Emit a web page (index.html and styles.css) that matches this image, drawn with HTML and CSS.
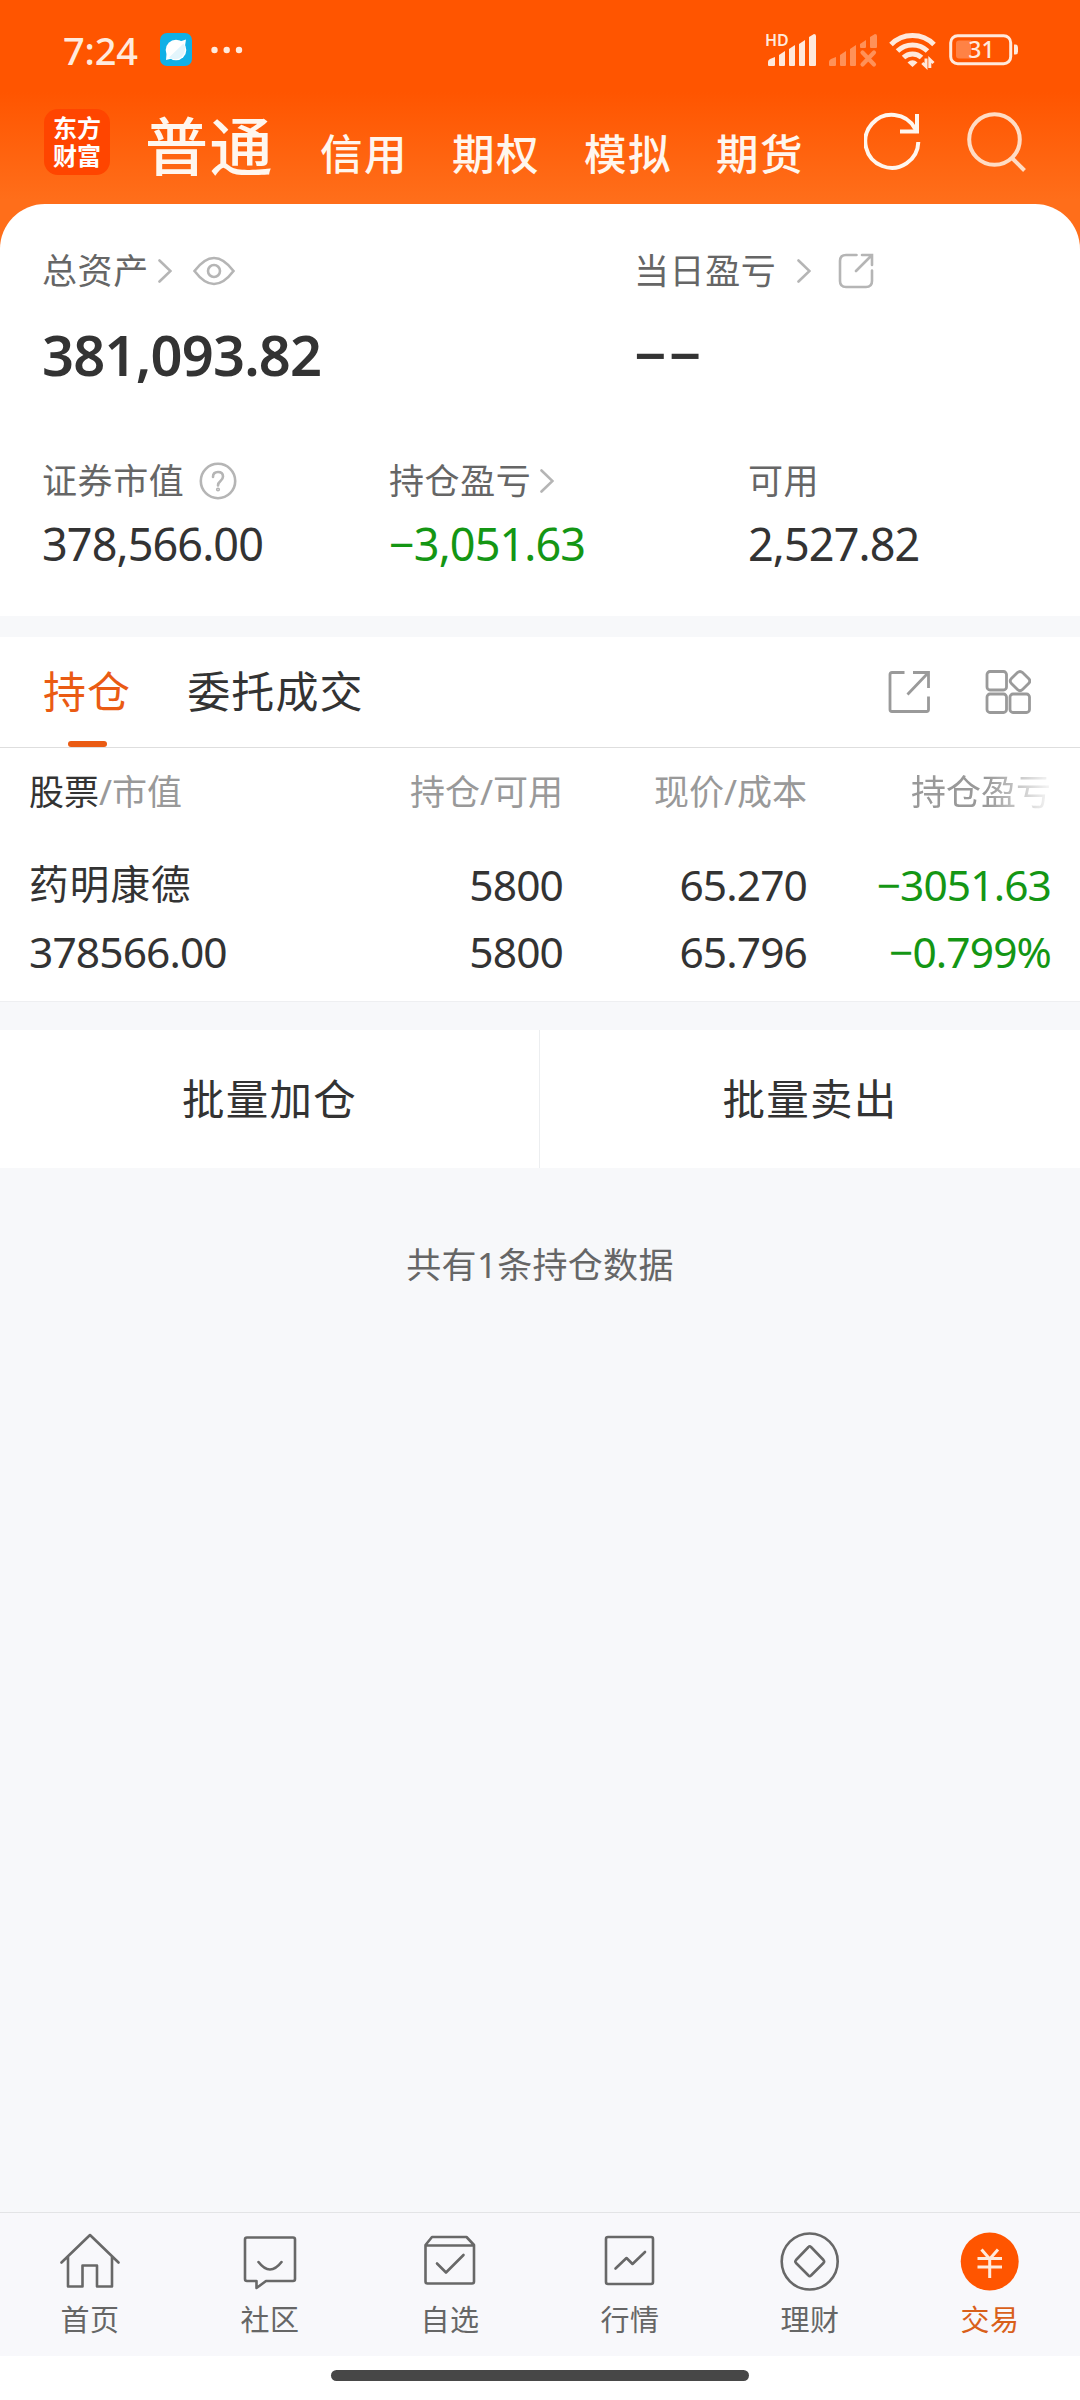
FILE: index.html
```html
<!DOCTYPE html>
<html lang="zh-CN">
<head>
  <meta charset="UTF-8">
  <meta name="viewport" content="width=device-width, initial-scale=1">
  <title>交易</title>
  <link rel="stylesheet" href="styles.css">
</head>
<body>
  <div class="page">
    <div class="top">
      <!-- Phone status bar -->
      <div class="status-bar">
        <span class="time">7:24</span>
        <svg class="app-icon" width="32" height="33" viewBox="0 0 32 33">
          <rect width="32" height="33" rx="7" fill="#10b0e6"/>
          <circle cx="16" cy="17" r="10.3" fill="#fff"/>
          <path d="M20 8.500L26 6.500L25 13ZM6.500 21L6 27L12 25.500Z" fill="#fff"/>
          <path d="M23.500 10.500A10.300 10.300 0 0 1 9 24.500Z" fill="#e3f5fc"/>
        </svg>
        <svg class="dots" width="32" height="8" viewBox="0 0 32 8" fill="#ffeadd">
          <circle cx="3.500" cy="4" r="3.200"/><circle cx="15.700" cy="4" r="3.200"/><circle cx="28" cy="4" r="3.200"/>
        </svg>
        <div class="status-right">
          <svg width="53" height="36" viewBox="0 0 53 36" fill="#ffe9dc">
            <text x="1" y="13.500" class="hd">HD</text>
            <path d="M4 33V30Q4 28 6 27L11 25V33Q11 34 10 34H5Q4 34 4 33ZM15 23L21 19V33Q21 34 20 34H16Q15 34 15 33ZM25 17L31 13V33Q31 34 30 34H26Q25 34 25 33ZM35 12L41 8V33Q41 34 40 34H36Q35 34 35 33ZM45 5L50 2Q52 2 52 4V33Q52 34 51 34H46Q45 34 45 33Z"/>
          </svg>
          <svg width="50" height="36" viewBox="0 0 50 36" fill="#ff9158">
            <path d="M1 33V30Q1 28 3 27L8 25V33Q8 34 7 34H2Q1 34 1 33ZM12 23L18 19V33Q18 34 17 34H13Q12 34 12 33ZM22 17L28 13V33Q28 34 27 34H23Q22 34 22 33ZM32 12L38 8V15Q38 16 37 16H33Q32 16 32 15ZM42 5L47 2Q49 2 49 4V15Q49 16 48 16H43Q42 16 42 15Z"/>
            <path d="M34.500 20.500L46 32.500M46 20.500L34.500 32.500" stroke="#ff9158" stroke-width="4.200" stroke-linecap="round"/>
          </svg>
          <svg width="48" height="36" viewBox="0 0 48 36" fill="none" stroke="#ffe9dc" stroke-width="5">
            <path d="M2 12.500A30 30 0 0 1 45 12.500"/>
            <path d="M8.500 19A21.500 21.500 0 0 1 38.500 19"/>
            <path d="M14.500 25.500A13 13 0 0 1 32.500 25.500"/>
            <path d="M18.500 30.500Q23.500 26 28.500 30.500L23.500 35Z" fill="#ffe9dc" stroke="none"/>
            <path d="M33.300 31L37 34.500V26.500M44.500 31L40.800 27.500V36" stroke-width="3"/>
          </svg>
          <svg width="71" height="36" viewBox="0 0 71 36">
            <rect x="2.700" y="3.700" width="60" height="28" rx="7" fill="none" stroke="#ffe9dc" stroke-width="3"/>
            <path d="M11 8.500H23V26.500H11Q8 26.500 8 23.500V11.500Q8 8.500 11 8.500Z" fill="#ff8245"/>
            <path d="M66 12.500H67.500Q70 12.500 70 15.500V19.500Q70 22.500 67.500 22.500H66Z" fill="#ffe9dc"/>
            <text x="33.500" y="26" class="battery">31</text>
          </svg>
        </div>
      </div>

      <!-- Account tabs -->
      <div class="account-bar">
        <div class="logo"><span>东方</span><span>财富</span></div>
        <div class="account-tabs">
          <span class="current">普通</span>
          <span>信用</span>
          <span>期权</span>
          <span>模拟</span>
          <span>期货</span>
        </div>
        <div class="account-tools">
          <svg width="58" height="60" viewBox="0 0 58 60" fill="none" stroke="#fff6ee" stroke-width="4">
            <path d="M54.300 30A26.500 26.500 0 1 1 51 16.500L53.500 20"/>
            <path d="M53 2V19.500H36"/>
          </svg>
          <svg width="60" height="60" viewBox="0 0 60 60" fill="none" stroke="#ffdcc4" stroke-width="4">
            <circle cx="27.500" cy="27.500" r="25.300"/>
            <path d="M44.500 45.500L57.500 58.500"/>
          </svg>
        </div>
      </div>

      <!-- Assets summary -->
      <div class="summary">
        <div class="summary-main">
          <div>
            <div class="label">总资产
              <svg class="arrow" width="14" height="24" viewBox="0 0 14 24"><path d="M1.500 1.500L12.500 12L1.500 22.500"/></svg>
              <svg class="eye" width="42" height="30" viewBox="0 0 42 30"><path d="M1.500 15Q21-11 40.500 15Q21 41 1.500 15Z"/><circle cx="21" cy="15" r="6"/></svg>
            </div>
            <div class="total">381,093.82</div>
          </div>
          <div>
            <div class="label">当日盈亏
              <svg class="arrow spaced" width="14" height="24" viewBox="0 0 14 24"><path d="M1.500 1.500L12.500 12L1.500 22.500"/></svg>
              <svg class="share" width="36" height="36" viewBox="0 0 36 36"><path d="M18.500 2H8Q2 2 2 8V28Q2 34 8 34H28Q34 34 34 28V17.500M18 18L33.500 2.500M24 2H34V12"/></svg>
            </div>
            <div class="total dashes">−−</div>
          </div>
        </div>
        <div class="summary-sub">
          <div>
            <div class="label">证券市值
              <svg class="help" width="38" height="38" viewBox="0 0 38 38"><circle cx="19" cy="19" r="17.200"/><path d="M14 15Q14 10 19 10Q24 10 24 14.500Q24 17 21.500 19Q19 21 19 23.500"/><circle cx="19" cy="27.500" r="0.800"/></svg>
            </div>
            <div class="value">378,566.00</div>
          </div>
          <div>
            <div class="label">持仓盈亏
              <svg class="arrow" width="14" height="24" viewBox="0 0 14 24"><path d="M1.500 1.500L12.500 12L1.500 22.500"/></svg>
            </div>
            <div class="value down">−3,051.63</div>
          </div>
          <div>
            <div class="label">可用</div>
            <div class="value">2,527.82</div>
          </div>
        </div>
      </div>
    </div>

    <!-- Positions -->
    <div class="positions">
      <div class="tabs">
        <div class="tab active">持仓</div>
        <div class="tab">委托成交</div>
        <div class="tab-tools">
          <svg width="42" height="44" viewBox="0 0 42 44"><path d="M16.500 2.500H4Q2 2.500 2 4.500V39.500Q2 41.500 4 41.500H38.500Q40.500 41.500 40.500 39.500V26.500M19.500 24.500L40 3M25 2.500H40.500V18"/></svg>
          <svg width="46" height="46" viewBox="0 0 46 46">
            <rect x="2" y="2.500" width="19.500" height="18.500" rx="3"/>
            <rect x="2" y="25" width="19.500" height="18.500" rx="3"/>
            <rect x="25" y="25" width="19.500" height="18.500" rx="3"/>
            <path d="M32.500 3.600Q35 1.200 37.500 3.600L43.600 9.500Q46 12 43.600 14.500L37.500 20.600Q35 23 32.500 20.600L26.400 14.500Q24 12 26.400 9.500Z"/>
          </svg>
        </div>
      </div>
      <div class="table-head">
        <div><b>股票</b>/市值</div>
        <div>持仓/可用</div>
        <div>现价/成本</div>
        <div class="fade">持仓盈亏</div>
      </div>
      <div class="table-row">
        <div><p class="stock">药明康德</p><p>378566.00</p></div>
        <div><p>5800</p><p>5800</p></div>
        <div><p>65.270</p><p>65.796</p></div>
        <div class="down"><p>−3051.63</p><p>−0.799%</p></div>
      </div>
    </div>

    <div class="batch">
      <div class="batch-btn">批量加仓</div>
      <div class="batch-btn">批量卖出</div>
    </div>
    <div class="count">共有1条持仓数据</div>

    <!-- Bottom navigation -->
    <div class="nav">
      <div class="nav-item">
        <svg width="60" height="60" viewBox="0 0 60 60"><path d="M1.500 30.500L30 3L58.500 30.500M8 25V54.500H22.500V33.500H37V54.500H52V25"/></svg>
        <span>首页</span>
      </div>
      <div class="nav-item">
        <svg width="60" height="60" viewBox="0 0 60 60"><path d="M7 5.500H53Q55 5.500 55 7.500V47Q55 49 53 49H26L16.500 56V49H7Q5 49 5 47V7.500Q5 5.500 7 5.500ZM18.500 30Q30 45 41.500 30"/></svg>
        <span>社区</span>
      </div>
      <div class="nav-item">
        <svg width="60" height="60" viewBox="0 0 60 60"><path d="M5.500 13L12 5H46.500L54 13V49.500Q54 51.500 52 51.500H7.500Q5.500 51.500 5.500 49.500ZM5.500 13.500H54M17 31.500L26 40.500L43.500 23"/></svg>
        <span>自选</span>
      </div>
      <div class="nav-item">
        <svg width="60" height="60" viewBox="0 0 60 60"><rect x="6" y="5" width="47" height="47" rx="2"/><path d="M15.500 36.500L26.500 26L32.500 32L45 20"/></svg>
        <span>行情</span>
      </div>
      <div class="nav-item">
        <svg width="60" height="60" viewBox="0 0 60 60"><circle cx="29.700" cy="29.500" r="28"/><path d="M28.500 15Q29.700 13.500 31 15L43.500 28Q44.800 29.500 43.500 31L31 43.500Q29.700 45 28.500 43.500L16 31Q14.700 29.500 16 28Z"/></svg>
        <span>理财</span>
      </div>
      <div class="nav-item active">
        <svg width="60" height="60" viewBox="0 0 60 60"><circle cx="29.700" cy="29.500" r="29" class="coin"/><path d="M21.500 17.500L29.700 27L38 17.500M17.500 26.500H42M17.500 35H42M29.700 26V46" class="yen"/></svg>
        <span>交易</span>
      </div>
    </div>
    <div class="home-indicator"><div class="bar"></div></div>
  </div>
</body>
</html>
```

FILE: styles.css
```css
* {
  box-sizing: border-box;
}
body {
  margin: 0;
  font-family: "Noto Sans", "Noto Sans CJK SC", sans-serif;
  color: #333;
  background: #f7f8fa;
}
p {
  margin: 0;
}
svg {
  display: block;
  flex: none;
}
.page {
  width: 1080px;
  height: 2400px;
  display: flex;
  flex-direction: column;
  overflow: hidden;
}
.top {
  background: linear-gradient(#ff5500 0, #ff5500 92px, #ff6e1a 200px);
}

/* status bar */
.status-bar {
  height: 99px;
  padding: 0 61px 0 63px;
  display: flex;
  align-items: center;
}
.time {
  width: 97px;
  font-size: 38px;
  font-weight: 500;
  line-height: 50px;
  letter-spacing: -0.2px;
  color: #ffeadd;
}
.dots {
  margin-left: 19px;
}
.status-right {
  margin-left: auto;
  display: flex;
  gap: 11px;
}
.status-right svg {
  overflow: visible;
}
.hd {
  font-size: 16px;
  font-weight: 600;
}
.battery {
  font-size: 23px;
  font-weight: 500;
  text-anchor: middle;
  fill: #ffe9dc;
}

/* account bar */
.account-bar {
  height: 105px;
  padding: 0 53px 0 44px;
  display: flex;
}
.logo {
  width: 66px;
  height: 66px;
  margin-top: 10px;
  padding-top: 5px;
  border-radius: 14px;
  background: #ff4500;
  color: #fff;
  font-size: 24px;
  font-weight: 700;
  line-height: 28px;
  display: flex;
  flex-direction: column;
  align-items: center;
}
.account-tabs {
  margin-left: 35px;
  height: 94px;
  display: flex;
  align-items: baseline;
  gap: 44px;
  font-size: 42.5px;
  font-weight: 500;
  letter-spacing: 1.5px;
  line-height: 94px;
  color: #fff6ee;
}
.account-tabs .current {
  font-size: 63px;
  margin-right: 2px;
}
.account-tools {
  margin: 13px 0 0 auto;
  display: flex;
  gap: 45px;
}

/* summary */
.summary {
  height: 412px;
  padding: 47px 0 0 42px;
  border-radius: 45px 45px 0 0;
  background: #fff;
}
.summary-main {
  display: grid;
  grid-template-columns: 592px 1fr;
}
.summary-sub {
  display: grid;
  grid-template-columns: 347px 359px 1fr;
  margin-top: 72px;
}
.label {
  display: flex;
  align-items: center;
  height: 40px;
  font-size: 35px;
  letter-spacing: 0.6px;
  line-height: 40px;
  color: #666;
}
.label svg {
  fill: none;
  stroke: #b5b5b5;
  stroke-width: 2.6;
  stroke-linecap: round;
}
.label .arrow {
  margin-left: 9px;
}
.label .arrow.spaced {
  margin-left: 21px;
}
.label .eye {
  margin-left: 21px;
}
.label .share {
  margin-left: 27px;
}
.label .help {
  margin-left: 15px;
}
.total {
  margin-top: 28px;
  font-size: 56px;
  font-weight: 600;
  line-height: 70px;
  letter-spacing: -0.8px;
}
.dashes {
  letter-spacing: 2.4px;
}
.value {
  margin-top: 13px;
  font-size: 45px;
  line-height: 60px;
  letter-spacing: -0.9px;
}
.down {
  color: #149614;
}

/* positions */
.positions {
  margin-top: 21px;
  height: 365px;
  background: #fff;
  border-bottom: 1px solid #eeeff1;
}
.tabs {
  height: 111px;
  padding: 0 49px 0 43px;
  display: flex;
  gap: 56px;
  border-bottom: 1px solid #dedede;
}
.tab {
  display: flex;
  flex-direction: column;
  align-items: center;
  font-size: 43px;
  letter-spacing: 1.1px;
  line-height: 110px;
}
.tab.active {
  color: #ea5b13;
}
.tab.active::after {
  content: "";
  width: 39px;
  height: 6px;
  margin-top: -6px;
  border-radius: 3px;
  background: #ea5b13;
}
.tab-tools {
  margin-left: auto;
  display: flex;
  align-items: center;
  gap: 55px;
}
.tab-tools svg {
  fill: none;
  stroke: #9a9a9a;
  stroke-width: 2.8;
}
.table-head,
.table-row {
  display: grid;
  grid-template-columns: 1fr 244px 244px 244px;
  padding: 0 29px 0 29px;
  text-align: right;
}
.table-head {
  padding-top: 24px;
  font-size: 35px;
  line-height: 40px;
  color: #999;
}
.table-head b {
  font-weight: 400;
  color: #333;
}
.table-head div:first-child,
.table-row div:first-child {
  text-align: left;
}
.fade {
  -webkit-mask-image: linear-gradient(to right, #000 180px, rgba(0, 0, 0, 0.1) 242px);
  mask-image: linear-gradient(to right, #000 180px, rgba(0, 0, 0, 0.1) 242px);
}
.table-row {
  padding-top: 39px;
  font-size: 42.5px;
  letter-spacing: -0.9px;
  line-height: 67px;
}
.table-row .stock {
  font-size: 39.5px;
  letter-spacing: 1.2px;
}

.batch {
  height: 138px;
  margin-top: 28px;
  display: flex;
  background: #fff;
}
.batch-btn {
  width: 540px;
  text-align: center;
  font-size: 42.5px;
  letter-spacing: 1.3px;
  line-height: 138px;
}
.batch-btn:first-child {
  border-right: 1px solid #eceef0;
}
.count {
  margin-top: 77px;
  text-align: center;
  font-size: 35px;
  letter-spacing: 0.3px;
  line-height: 40px;
  color: #666;
}

/* bottom nav */
.nav {
  margin-top: auto;
  height: 144px;
  padding-top: 19px;
  display: flex;
  border-top: 1px solid #e3e4e6;
  background: #f8f8fb;
}
.nav-item {
  flex: 1;
  display: flex;
  flex-direction: column;
  align-items: center;
  font-size: 29px;
  letter-spacing: 0.5px;
  color: #666;
}
.nav-item span {
  margin-top: 8px;
  line-height: 40px;
}
.nav-item svg {
  fill: none;
  stroke: #686868;
  stroke-width: 2.6;
  stroke-linecap: round;
  stroke-linejoin: round;
}
.nav-item.active {
  color: #d9601a;
}
.nav-item .coin {
  fill: #ff5500;
  stroke: none;
}
.nav-item .yen {
  stroke: #ffe9dc;
  stroke-width: 3;
  stroke-linecap: butt;
}
.home-indicator {
  height: 44px;
  padding-top: 14px;
  background: #fff;
}
.home-indicator .bar {
  width: 418px;
  height: 11px;
  margin: 0 auto;
  border-radius: 6px;
  background: #474747;
}
```
